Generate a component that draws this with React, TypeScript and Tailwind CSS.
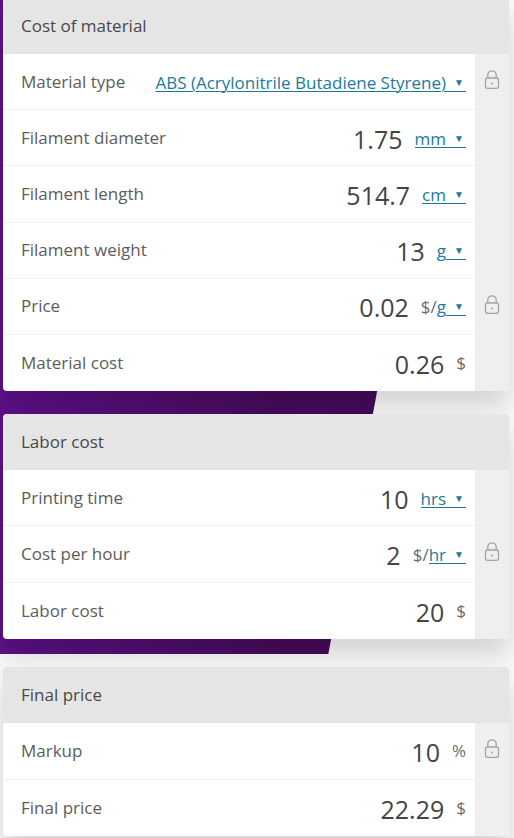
import { useId, useState } from "react";

type Field = {
  label: string;
  value?: string;
  prefix?: string;
  suffix?: string;
  options?: string[];
  computed?: boolean;
  lock?: boolean;
};

const material: Field[] = [
  {
    label: "Material type",
    options: ["ABS (Acrylonitrile Butadiene Styrene)", "PLA (Polylactic Acid)"],
    lock: true,
  },
  { label: "Filament diameter", value: "1.75", options: ["mm", "cm", "in"] },
  { label: "Filament length", value: "514.7", options: ["cm", "m", "ft"] },
  { label: "Filament weight", value: "13", options: ["g", "kg", "oz"] },
  { label: "Price", value: "0.02", prefix: "$/", options: ["g", "kg", "oz"], lock: true },
  { label: "Material cost", value: "0.26", suffix: "$", computed: true },
];

const labor: Field[] = [
  { label: "Printing time", value: "10", options: ["hrs", "min"] },
  { label: "Cost per hour", value: "2", prefix: "$/", options: ["hr", "min"], lock: true },
  { label: "Labor cost", value: "20", suffix: "$", computed: true },
];

const total: Field[] = [
  { label: "Markup", value: "10", suffix: "%", lock: true },
  { label: "Final price", value: "22.29", suffix: "$", computed: true },
];

function LockIcon() {
  return (
    <svg width="16" height="20" viewBox="0 0 16 20" fill="none" stroke="#a3a3a3" strokeWidth="1.3" aria-hidden="true">
      <rect x="1.5" y="8" width="13" height="10.3" rx="2" />
      <path d="M3.8 8V5a4.2 4.2 0 0 1 8.4 0v3" />
      <circle cx="8" cy="13.4" r="1" fill="#a3a3a3" stroke="none" />
    </svg>
  );
}

function UnitSelect({ id, options, label }: { id?: string; options: string[]; label: string }) {
  return (
    <span className="relative inline-flex text-[#1c7a9c]">
      <select
        id={id}
        aria-label={label}
        className="field-sizing-content h-6 cursor-pointer appearance-none bg-transparent pr-5 leading-6 underline decoration-1 underline-offset-2 outline-none"
      >
        {options.map((o) => (
          <option key={o}>{o}</option>
        ))}
      </select>
      <span
        aria-hidden="true"
        className="pointer-events-none absolute right-0 h-6 w-5 overflow-hidden leading-6 whitespace-pre underline decoration-1 underline-offset-2"
      >
        {"\u00a0\u00a0\u00a0\u00a0\u00a0\u00a0"}
      </span>
      <span
        aria-hidden="true"
        className="pointer-events-none absolute right-0 flex h-6 w-3.5 justify-center text-[10px] leading-[22px]"
      >
        ▼
      </span>
    </span>
  );
}

function Row({ field }: { field: Field }) {
  const id = useId();
  const [value, setValue] = useState(field.value ?? "");
  return (
    <div className="group flex">
      <div className="flex min-w-0 flex-1 items-center gap-3 border-b border-[#f0f0f0] pr-[9px] pl-[18px] group-last:border-b-0">
        <label htmlFor={id} className="shrink-0 text-[#5c5c5c]">
          {field.label}
        </label>
        {field.value === undefined ? (
          <span className="flex-1" />
        ) : field.computed ? (
          <output id={id} className="min-w-0 flex-1 pt-0.5 text-right text-[25px] leading-8 text-[#444]">
            {value}
          </output>
        ) : (
          <input
            id={id}
            value={value}
            inputMode="decimal"
            onChange={(e) => setValue(e.target.value)}
            className="min-w-0 flex-1 bg-transparent pt-0.5 text-right text-[25px] leading-8 text-[#444] outline-none"
          />
        )}
        <span className={`flex shrink-0 items-center leading-6 text-[#6a6a6a] ${field.options ? "pt-0.5" : ""}`}>
          {field.prefix}
          {field.options && (
            <UnitSelect
              id={field.value === undefined ? id : undefined}
              options={field.options}
              label={field.value === undefined ? field.label : `${field.label} unit`}
            />
          )}
          {field.suffix}
        </span>
      </div>
      <div className="flex w-[34px] shrink-0 justify-center bg-[#efefef] pt-4">
        {field.lock && (
          <button type="button" aria-label={`Lock ${field.label}`} className="h-5 cursor-pointer">
            <LockIcon />
          </button>
        )}
      </div>
    </div>
  );
}

type CardProps = { title: string; fields: Field[]; className?: string; bodyClassName: string };

function Card({ title, fields, className = "", bodyClassName }: CardProps) {
  return (
    <section className={`rounded shadow-[0_16px_24px_rgba(0,0,0,0.14)] ${className}`}>
      <div className="overflow-hidden rounded bg-white">
        <h2 className="flex h-14 items-center bg-[#e5e5e5] px-[18px] text-[#484848]">{title}</h2>
        <div className={`grid auto-rows-fr grid-cols-1 ${bodyClassName}`}>
          {fields.map((f) => (
            <Row key={f.label} field={f} />
          ))}
        </div>
      </div>
    </section>
  );
}

export default function App() {
  return (
    <div className="relative isolate min-h-screen overflow-hidden bg-[#f8f8f8] font-['Open_Sans','Noto_Sans',sans-serif] text-[17px]">
      <div className="absolute top-0 left-0 -z-10 h-[654px] w-7/8 bg-linear-to-r from-[#5d108a] via-[#470b5c] via-60% to-[#42085a] [clip-path:polygon(0_0,100%_0,73%_100%,0_100%)]" />
      <main className="-mt-0.5 pr-[5px] pl-[3px]">
        <Card title="Cost of material" fields={material} bodyClassName="min-h-[337px]" />
        <Card title="Labor cost" fields={labor} className="mt-[23px]" bodyClassName="min-h-[169px]" />
        <Card title="Final price" fields={total} className="mt-7" bodyClassName="min-h-[113px]" />
      </main>
    </div>
  );
}
